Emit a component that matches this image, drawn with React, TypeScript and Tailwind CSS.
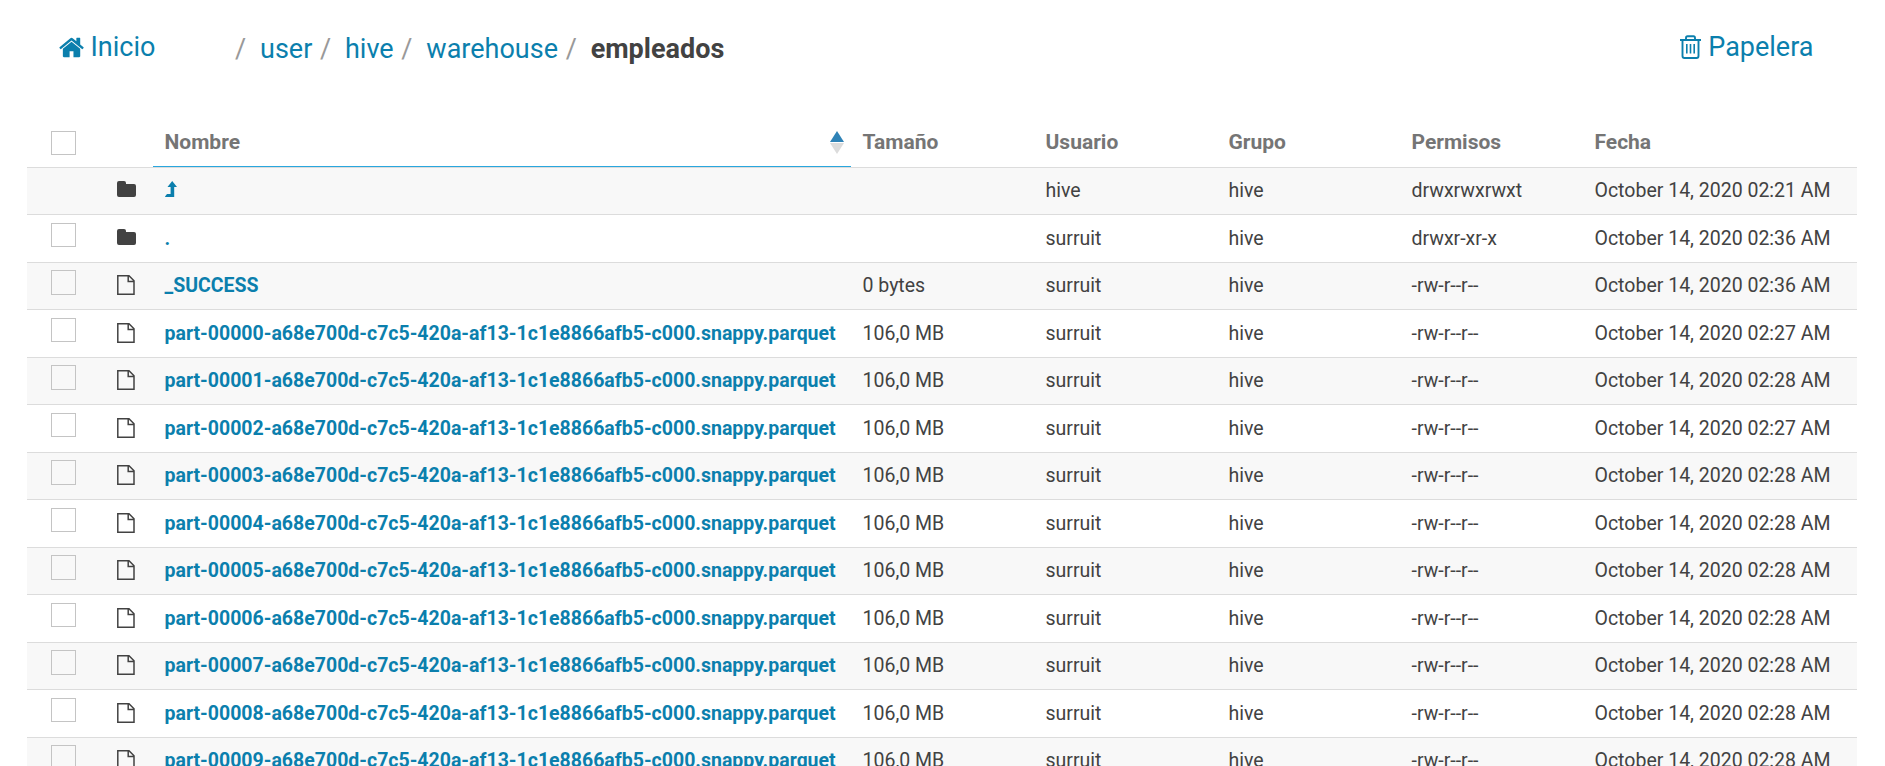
import React from 'react';

type Row = { kind: 'dir' | 'file'; name: string; up?: boolean; size: string; user: string; perms: string; date: string };

const minutes = ['27', '28', '27', '28', '28', '28', '28', '28', '28', '28'];

const rows: Row[] = [
  { kind: 'dir', name: '', up: true, size: '', user: 'hive', perms: 'drwxrwxrwxt', date: 'October 14, 2020 02:21 AM' },
  { kind: 'dir', name: '.', size: '', user: 'surruit', perms: 'drwxr-xr-x', date: 'October 14, 2020 02:36 AM' },
  { kind: 'file', name: '_SUCCESS', size: '0 bytes', user: 'surruit', perms: '-rw-r--r--', date: 'October 14, 2020 02:36 AM' },
  ...minutes.map((m, i): Row => ({
    kind: 'file',
    name: `part-0000${i}-a68e700d-c7c5-420a-af13-1c1e8866afb5-c000.snappy.parquet`,
    size: '106,0 MB',
    user: 'surruit',
    perms: '-rw-r--r--',
    date: `October 14, 2020 02:${m} AM`,
  })),
];

const columns = 'grid grid-cols-[75px_51px_698px_183px_183px_183px_183px_1fr]';

function HomeIcon() {
  return (
    <svg viewBox="0 0 1792 1792" className="h-[27px] w-[27px] shrink-0" fill="currentColor">
      <path d="M1408 992v480q0 26-19 45t-45 19h-384v-384h-256v384h-384q-26 0-45-19t-19-45v-480q0-1 .5-3t.5-3l575-474 575 474q1 2 1 6zm223-69l-62 74q-8 9-21 11h-3q-13 0-21-7l-692-577-692 577q-12 8-24 7-13-2-21-11l-62-74q-8-10-7-23.5t11-21.5l719-599q32-26 76-26t76 26l244 204v-195q0-14 9-23t23-9h192q14 0 23 9t9 23v408l219 182q10 8 11 21.5t-7 23.5z" />
    </svg>
  );
}

function TrashIcon() {
  return (
    <svg viewBox="0 0 21 24" className="h-6 w-[21px] shrink-0" fill="none" stroke="currentColor" strokeWidth="1.9">
      <path d="M0 5h21M2.500 5v16q0 2 2 2h12q2 0 2-2V5M6 5V3q0-1.800 1.500-1.800h6q1.500 0 1.500 1.800v2" />
      <path d="M6.800 9v9.500M10.500 9v9.500M14.200 9v9.500" strokeWidth="1.6" />
    </svg>
  );
}

function FolderIcon() {
  return (
    <svg viewBox="0 0 19 16" className="h-4 w-[19px]" fill="#424242">
      <path d="M2 0h5q2 0 2 2v1h8q2 0 2 2v9q0 2-2 2H2q-2 0-2-2V2q0-2 2-2z" />
    </svg>
  );
}

function FileIcon() {
  return (
    <svg viewBox="0 0 18 20" className="h-5 w-[18px]" fill="none" stroke="#424242" strokeWidth="1.5">
      <path d="M.8.800H12l5 5v13.400H.8zM11.200.800v5.700h5.800" />
    </svg>
  );
}

function LevelUpIcon() {
  return (
    <svg viewBox="0 0 12 16" className="h-4 w-3" fill="currentColor">
      <path d="M7.200 0L12 6H9.200v10H.3L0 15.500 2 13h3.600V6H2.500z" />
    </svg>
  );
}

function Checkbox() {
  return <span className="block h-[24.5px] w-[25px] border border-[#c4c4c4]" />;
}

export default function App() {
  return (
    <div className="h-[766px] w-[1885px] overflow-hidden bg-white font-['Roboto',sans-serif] text-[19.5px] text-[#424242]">
      <header className="flex h-[118px] items-start pr-[71.5px] pl-[58.5px] text-[27px] leading-[36px] text-[#0b7fad]">
        <a className="mt-[29px] flex h-[36px] w-[176.5px] items-center gap-[5px]"><HomeIcon />Inicio</a>
        <nav className="mt-[31px] flex">
          {['user', 'hive', 'warehouse'].map((p) => (
            <span key={p} className="flex"><span className="w-[25px] text-[#999]">/</span><a className="mr-[7.7px]">{p}</a></span>
          ))}
          <span className="w-[25px] text-[#999]">/</span>
          <b className="font-bold text-[#424242]">empleados</b>
        </nav>
        <a className="mt-[29px] ml-auto flex items-center gap-[7px]"><TrashIcon />Papelera</a>
      </header>
      <main className="mr-[28px] ml-[27px]">
        <div className={`${columns} h-[48.75px] text-[21px] font-bold text-[#757575]`}>
          <div className="pt-[12.8px] pl-[24px]"><Checkbox /></div>
          <div />
          <div className="flex justify-between border-b border-[#29a7de] pr-[7.5px] pl-[11.5px]">
            <span className="leading-[48px]">Nombre</span>
            <svg viewBox="0 0 14 23" className="mt-[13px] h-[23px] w-[14px]">
              <path d="M7 0l7 11H0z" fill="#2f83b7" />
              <path d="M0 12h14L7 23z" fill="#dcdcdc" />
            </svg>
          </div>
          {['Tamaño', 'Usuario', 'Grupo', 'Permisos', 'Fecha'].map((h) => (
            <div key={h} className="pl-[11.5px] leading-[48px]">{h}</div>
          ))}
        </div>
        {rows.map((r, i) => (
          <div key={i} className={`${columns} h-[47.5px] border-t border-[#dcdcdc] pt-[0.4px] leading-[46px] odd:bg-white even:bg-[#f8f8f8]`}>
            <div className="pt-[7.1px] pl-[24px]">{!r.up && <Checkbox />}</div>
            <div className={r.kind === 'dir' ? 'pt-[13px] pl-[15px]' : 'pt-[12px] pl-[15px]'}>{r.kind === 'dir' ? <FolderIcon /> : <FileIcon />}</div>
            <div className="pl-[11.5px] font-bold text-[#0b7fad]">{r.up ? <div className="pt-[13px]"><LevelUpIcon /></div> : r.name}</div>
            <div className="pl-[11.5px]">{r.size}</div>
            <div className="pl-[11.5px]">{r.user}</div>
            <div className="pl-[11.5px]">hive</div>
            <div className="pl-[11.5px]">{r.perms}</div>
            <div className="pl-[11.5px] whitespace-nowrap">{r.date}</div>
          </div>
        ))}
      </main>
    </div>
  );
}
